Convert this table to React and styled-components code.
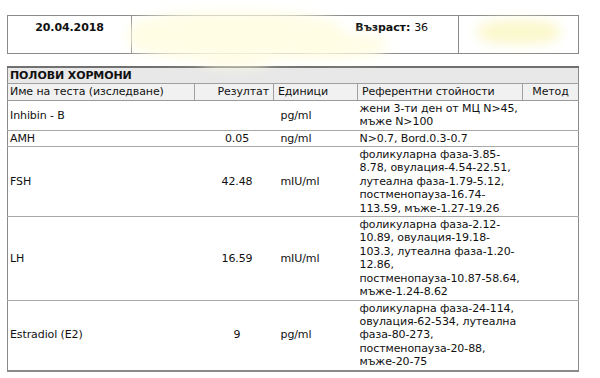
import styled, { createGlobalStyle } from 'styled-components'

const GlobalStyle = createGlobalStyle`
  body {
    margin: 0;
    background: #fff;
    font-family: "DejaVu Sans", Verdana, sans-serif;
    font-size: 11px;
    letter-spacing: -0.1px;
    color: #111;
  }
`

const rows = [
  { name: 'Inhibin - B', result: '', unit: 'pg/ml', ref: ['жени 3-ти ден от МЦ N>45,', 'мъже N>100'] },
  { name: 'AMH', result: '0.05', unit: 'ng/ml', ref: ['N>0.7, Bord.0.3-0.7'] },
  {
    name: 'FSH',
    result: '42.48',
    unit: 'mIU/ml',
    ref: [
      'фоликуларна фаза-3.85-',
      '8.78, овулация-4.54-22.51,',
      'лутеална фаза-1.79-5.12,',
      'постменопауза-16.74-',
      '113.59, мъже-1.27-19.26',
    ],
  },
  {
    name: 'LH',
    result: '16.59',
    unit: 'mIU/ml',
    ref: [
      'фоликуларна фаза-2.12-',
      '10.89, овулация-19.18-',
      '103.3, лутеална фаза-1.20-',
      '12.86,',
      'постменопауза-10.87-58.64,',
      'мъже-1.24-8.62',
    ],
  },
  {
    name: 'Estradiol (E2)',
    result: '9',
    unit: 'pg/ml',
    ref: [
      'фоликуларна фаза-24-114,',
      'овулация-62-534, лутеална',
      'фаза-80-273,',
      'постменопауза-20-88,',
      'мъже-20-75',
    ],
  },
]

const App = () => {
  return (
    <Page>
      <GlobalStyle />
      <InfoTable>
        <tbody>
          <tr>
            <DateCell>20.04.2018</DateCell>
            <PatientCell>
              <Age>
                <b>Възраст:</b> 36
              </Age>
            </PatientCell>
            <IdCell />
          </tr>
        </tbody>
      </InfoTable>

      <ResultTable>
        <colgroup>
          <col style={{ width: 187 }} />
          <col style={{ width: 79 }} />
          <col style={{ width: 84 }} />
          <col style={{ width: 165 }} />
          <col />
        </colgroup>
        <thead>
          <tr>
            <SectionTitle colSpan={5}>ПОЛОВИ ХОРМОНИ</SectionTitle>
          </tr>
          <tr>
            <HeadCell>Име на теста (изследване)</HeadCell>
            <HeadCell $align='right'>Резултат</HeadCell>
            <HeadCell>Единици</HeadCell>
            <HeadCell>Референтни стойности</HeadCell>
            <HeadCell $align='center'>Метод</HeadCell>
          </tr>
        </thead>
        <tbody>
          {rows.map((r) => (
            <tr key={r.name}>
              <NameCell>{r.name}</NameCell>
              <ResultCell>{r.result}</ResultCell>
              <UnitCell>{r.unit}</UnitCell>
              <RefCell>
                {r.ref.map((line) => (
                  <RefLine key={line}>{line}</RefLine>
                ))}
              </RefCell>
              <MethodCell />
            </tr>
          ))}
        </tbody>
      </ResultTable>

      <Smudge $x={128} $y={12} $w={215} $h={48} />
      <Smudge $x={300} $y={34} $w={86} $h={24} />
      <Smudge $x={478} $y={20} $w={82} $h={24} $tone='#fbf7c8' />
      <Smudge $x={200} $y={56} $w={70} $h={10} />
    </Page>
  )
}

export default App

const Page = styled.div`
  position: relative;
  padding: 15px 0 0 7px;
  width: 572px;
  height: 363px;
  overflow: hidden;
`

const InfoTable = styled.table`
  width: 572px;
  height: 39px;
  border-collapse: collapse;
  border: 1px solid #8a8a8a;
  margin-bottom: 12px;

  td {
    border: 1px solid #8a8a8a;
    vertical-align: top;
    padding: 5px 4px 4px;
  }
`

const DateCell = styled.td`
  width: 115px;
  text-align: center;
  font-weight: bold;
`

const PatientCell = styled.td`
  width: 318px;
`

const Age = styled.div`
  display: flex;
  justify-content: flex-end;
  gap: 4px;
  padding-right: 26px;
`

const IdCell = styled.td``

const ResultTable = styled.table`
  width: 572px;
  border-collapse: collapse;
  table-layout: fixed;
  border-top: 2px solid #707070;
  border-left: 1px solid #8a8a8a;
  border-right: 1px solid #8a8a8a;
  border-bottom: 2px solid #8a8a8a;
  line-height: 13.4px;

  td,
  th {
    padding: 1px 2px;
    font-weight: normal;
  }
`

const SectionTitle = styled.th`
  background: #e8e8e8;
  text-align: left;
  font-weight: bold !important;
  border-bottom: 1px solid #a0a0a0;
`

const HeadCell = styled.th`
  background: #f1f1f1;
  text-align: ${(p) => p.$align || 'left'};
  border-left: 1px solid #a0a0a0;
  border-bottom: 1px solid #9a9a9a;
  padding: 1px 4px !important;

  &:first-child {
    border-left: none;
    padding-left: 2px !important;
  }
`

const BodyCell = styled.td`
  border-bottom: 1px solid #a8a8a8;
  vertical-align: middle;
`

const NameCell = styled(BodyCell)``

const ResultCell = styled(BodyCell)`
  text-align: center;
  padding-left: 8px !important;
`

const UnitCell = styled(BodyCell)`
  padding-left: 7px !important;
`

const RefCell = styled(BodyCell)`
  overflow: visible;
`

const RefLine = styled.div`
  white-space: nowrap;
`

const MethodCell = styled(BodyCell)``

const Smudge = styled.div`
  position: absolute;
  left: ${(p) => p.$x}px;
  top: ${(p) => p.$y}px;
  width: ${(p) => p.$w}px;
  height: ${(p) => p.$h}px;
  background: ${(p) => p.$tone || '#fffde2'};
  border-radius: 40%;
  filter: blur(6px);
  opacity: 0.9;
  pointer-events: none;
`
